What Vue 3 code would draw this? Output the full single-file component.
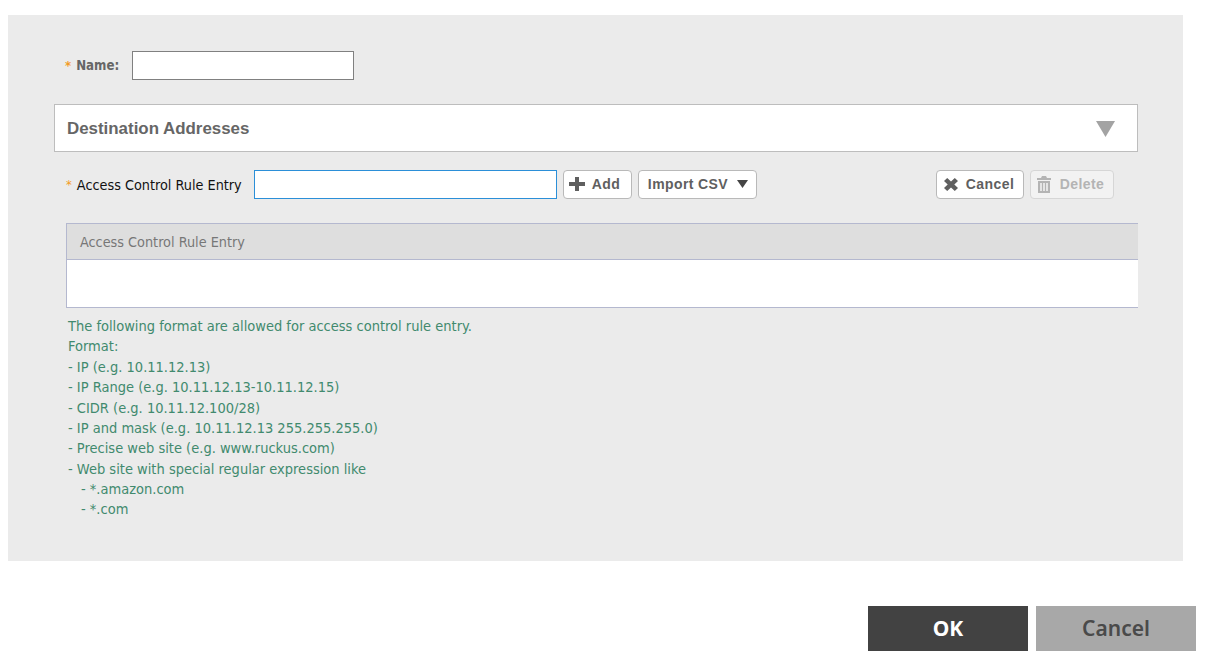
<script setup>
const lines = [
  'The following format are allowed for access control rule entry.',
  'Format:',
  '- IP (e.g. 10.11.12.13)',
  '- IP Range (e.g. 10.11.12.13-10.11.12.15)',
  '- CIDR (e.g. 10.11.12.100/28)',
  '- IP and mask (e.g. 10.11.12.13 255.255.255.0)',
  '- Precise web site (e.g. www.ruckus.com)',
  '- Web site with special regular expression like',
]
const sublines = ['- *.amazon.com', '- *.com']
</script>

<template>
  <div class="page">
    <div class="panel">
      <div class="name-row">
        <span class="star star-bold">*</span>
        <label class="name-label">Name:</label>
        <input class="name-input" type="text" />
      </div>

      <div class="section-bar">
        <span class="section-title">Destination Addresses</span>
        <svg class="section-arrow" width="19" height="16" viewBox="0 0 19 16"><path d="M0 0H19L9.5 16Z" fill="#a3a3a3" /></svg>
      </div>

      <div class="entry-row">
        <span class="star">*</span>
        <label class="entry-label">Access Control Rule Entry</label>
        <input class="entry-input" type="text" />
        <button class="btn add-btn" type="button">
          <svg width="16" height="14" viewBox="0 0 16 14"><path d="M6 0H10V5H16V9H10V14H6V9H0V5H6Z" fill="#5f5f5f" /></svg>
          <span>Add</span>
        </button>
        <button class="btn import-btn" type="button">
          <span>Import CSV</span>
          <svg width="11" height="8" viewBox="0 0 11 8"><path d="M0 0H11L5.5 8Z" fill="#444" /></svg>
        </button>
        <div class="spacer"></div>
        <button class="btn cancel-btn" type="button">
          <svg width="14" height="13" viewBox="0 0 14 13"><path d="M3.2 0L7 3.6L10.8 0L14 3.1L10.3 6.5L14 9.9L10.8 13L7 9.4L3.2 13L0 9.9L3.7 6.5L0 3.1Z" fill="#5f5f5f" /></svg>
          <span>Cancel</span>
        </button>
        <button class="btn delete-btn" type="button">
          <svg width="14" height="17" viewBox="0 0 14 17"><path d="M5 0H9L10 2H14V4H0V2H4ZM1 5H13V17H1ZM3.2 7V15H4.8V7ZM6.2 7V15H7.8V7ZM9.2 7V15H10.8V7Z" fill="#b4b4b4" fill-rule="evenodd" /></svg>
          <span>Delete</span>
        </button>
      </div>

      <div class="table">
        <div class="table-head">Access Control Rule Entry</div>
        <div class="table-body"></div>
      </div>

      <div class="help">
        <div v-for="line in lines" :key="line" class="help-line">{{ line }}</div>
        <div v-for="line in sublines" :key="line" class="help-line help-sub">{{ line }}</div>
      </div>
    </div>

    <div class="footer">
      <button class="footer-btn ok" type="button">OK</button>
      <button class="footer-btn dismiss" type="button">Cancel</button>
    </div>
  </div>
</template>

<style>
html, body { margin: 0; background: #fff; }
</style>

<style scoped>
.page {
  width: 1208px;
  height: 660px;
  overflow: hidden;
  padding-top: 15px;
  box-sizing: border-box;
  font-family: "DejaVu Sans Condensed", "DejaVu Sans", sans-serif;
}
.panel {
  margin-left: 8px;
  width: 1175px;
  height: 546px;
  background: #ebebeb;
  box-sizing: border-box;
  padding-top: 36px;
}
.name-row {
  display: flex;
  align-items: center;
  height: 29px;
  padding-left: 57px;
}
.star { color: #f39b26; font-size: 13px; }
.star-bold { font-weight: 700; }
.name-label {
  margin-left: 5px;
  width: 56px;
  font-size: 13.2px;
  font-weight: 700;
  color: #666;
}
.name-input {
  width: 222px;
  height: 29px;
  box-sizing: border-box;
  border: 1px solid #808080;
  background: #fff;
  outline: none;
  padding: 0;
}
.section-bar {
  margin: 24px 0 0 46px;
  width: 1084px;
  height: 48px;
  box-sizing: border-box;
  border: 1px solid #bdbdbd;
  background: #fff;
  display: flex;
  align-items: center;
  justify-content: space-between;
  padding: 1px 22px 0 12px;
}
.section-title {
  font-family: "Liberation Sans", sans-serif;
  font-size: 16.9px;
  font-weight: 700;
  color: #666;
}
.entry-row {
  display: flex;
  align-items: center;
  height: 29px;
  margin-top: 18px;
  padding-left: 58px;
}
.entry-label {
  margin-left: 5px;
  width: 177px;
  font-size: 14.3px;
  color: #111;
  white-space: nowrap;
}
.entry-input {
  width: 303px;
  height: 29px;
  box-sizing: border-box;
  border: 1px solid #2b8fd8;
  background: #fff;
  outline: none;
  padding: 0;
}
.btn {
  height: 29px;
  box-sizing: border-box;
  border: 1px solid #b9b9b9;
  border-radius: 4px;
  background: #fff;
  color: #5f5f5f;
  font-family: "Liberation Sans", sans-serif;
  font-size: 14px;
  font-weight: 700;
  letter-spacing: 0.4px;
  display: flex;
  align-items: center;
  padding: 0 0 1px;
}
.add-btn { width: 69px; margin-left: 6px; padding-left: 5px; gap: 7px; }
.import-btn { width: 119px; margin-left: 6px; padding-left: 9px; gap: 9px; }
.spacer { width: 179px; }
.cancel-btn { width: 88px; padding-left: 7px; gap: 8px; }
.delete-btn {
  width: 84px;
  margin-left: 6px;
  padding-left: 6px;
  gap: 9px;
  color: #b4b4b4;
  background: #f2f2f2;
  border-color: #d6d6d6;
}
.table {
  margin: 24px 0 0 58px;
  width: 1072px;
  height: 85px;
  box-sizing: border-box;
  border: 1px solid #b4b8cf;
  border-right: 0;
}
.table-head {
  height: 36px;
  box-sizing: border-box;
  border-bottom: 1px solid #b4b8cf;
  background: #dedede;
  color: #777;
  font-size: 14.3px;
  line-height: 37px;
  padding-left: 13px;
}
.table-body { height: 47px; background: #fff; }
.help {
  margin: 8px 0 0 60px;
  color: #418a6e;
  font-size: 14.5px;
  line-height: 20.37px;
}
.help-sub { padding-left: 13px; }
.footer {
  display: flex;
  gap: 8px;
  margin: 45px 0 0 868px;
}
.footer-btn {
  width: 160px;
  height: 45px;
  border: 0;
  padding: 0 0 2px;
  font-family: "Noto Sans", sans-serif;
  font-size: 21px;
  font-weight: 700;
}
.ok { background: #424242; color: #fff; }
.dismiss { background: #a8a8a8; color: #4a4a4a; font-weight: 600; }
</style>
